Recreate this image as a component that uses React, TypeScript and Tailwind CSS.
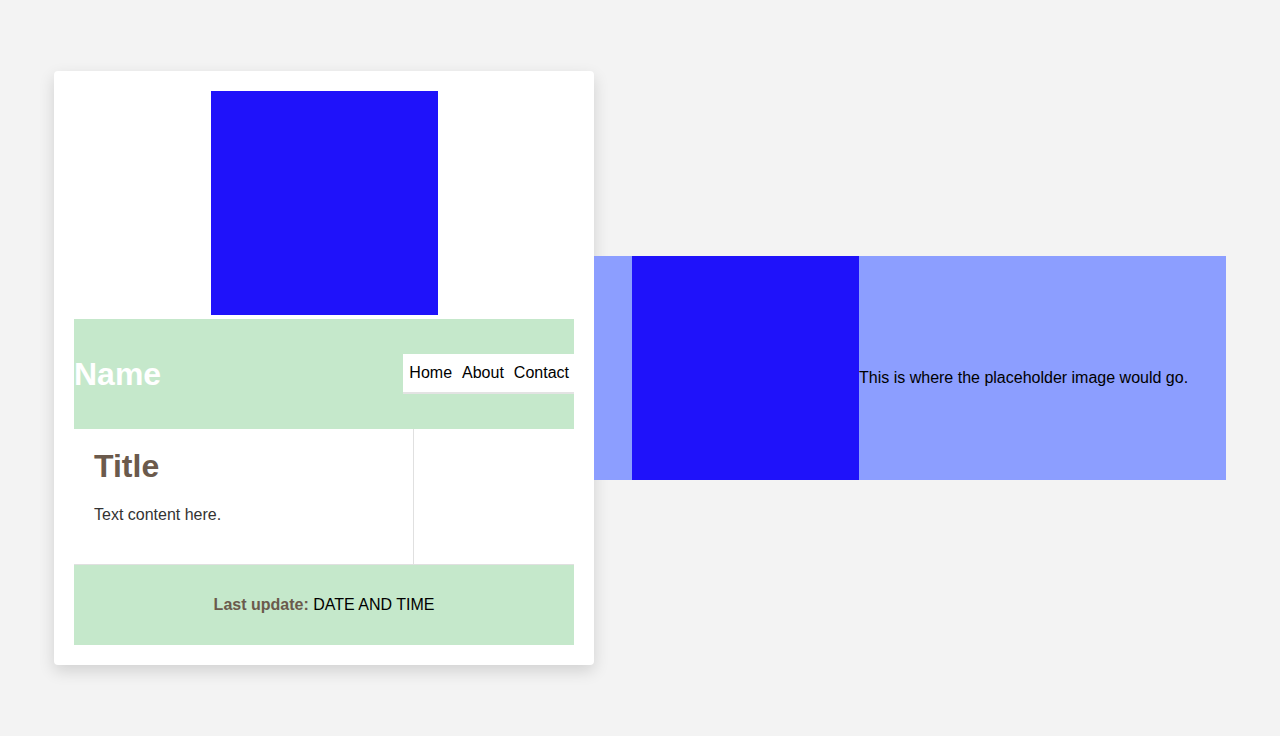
export default function App() {
  return (
    <div
      className="min-h-screen w-full bg-[#f3f3f3] flex items-center px-[54px] text-base text-black"
      style={{ fontFamily: '"Liberation Sans", Arial, sans-serif' }}
    >
      {/* card */}
      <div className="w-[540px] shrink-0 bg-white rounded-[4px] shadow-[0_6px_16px_rgba(0,0,0,0.14)] p-5">
        <div className="flex justify-center mb-[4px]">
          <div className="w-[227px] h-[224px] bg-[#1f12fa]" />
        </div>

        <header className="h-[110px] bg-[#c5e8cb] flex items-center justify-between">
          <h1 className="text-[32px] font-bold text-white leading-none">Name</h1>
          <nav className="bg-white h-[40px] border-b-2 border-[#e3e3e3] flex items-center gap-[10px] pl-[6px] pr-[5px]">
            <a>Home</a>
            <a>About</a>
            <a>Contact</a>
          </nav>
        </header>

        <main className="flex h-[135px]">
          <div className="w-[340px] border-r border-[#e0e0e0] pl-5 pt-[19px]">
            <h2 className="text-[32px] font-bold text-[#6b5a4c] leading-[37px]">Title</h2>
            <p className="mt-[21px] text-[#333333] leading-[18px]">Text content here.</p>
          </div>
          <aside className="flex-1" />
        </main>

        <footer className="h-[81px] bg-[#c5e8cb] border-t border-[#e0e0e0] flex items-center justify-center">
          <p>
            <span className="font-bold text-[#6b5a4c]">Last update:</span> DATE AND TIME
          </p>
        </footer>
      </div>

      {/* placeholder section */}
      <section className="w-[632px] h-[224px] bg-[#8c9eff] flex items-center pl-[38px]">
        <div className="w-[227px] h-[224px] bg-[#1f12fa] shrink-0" />
        <p className="pt-[19px]">This is where the placeholder image would go.</p>
      </section>
    </div>
  );
}
